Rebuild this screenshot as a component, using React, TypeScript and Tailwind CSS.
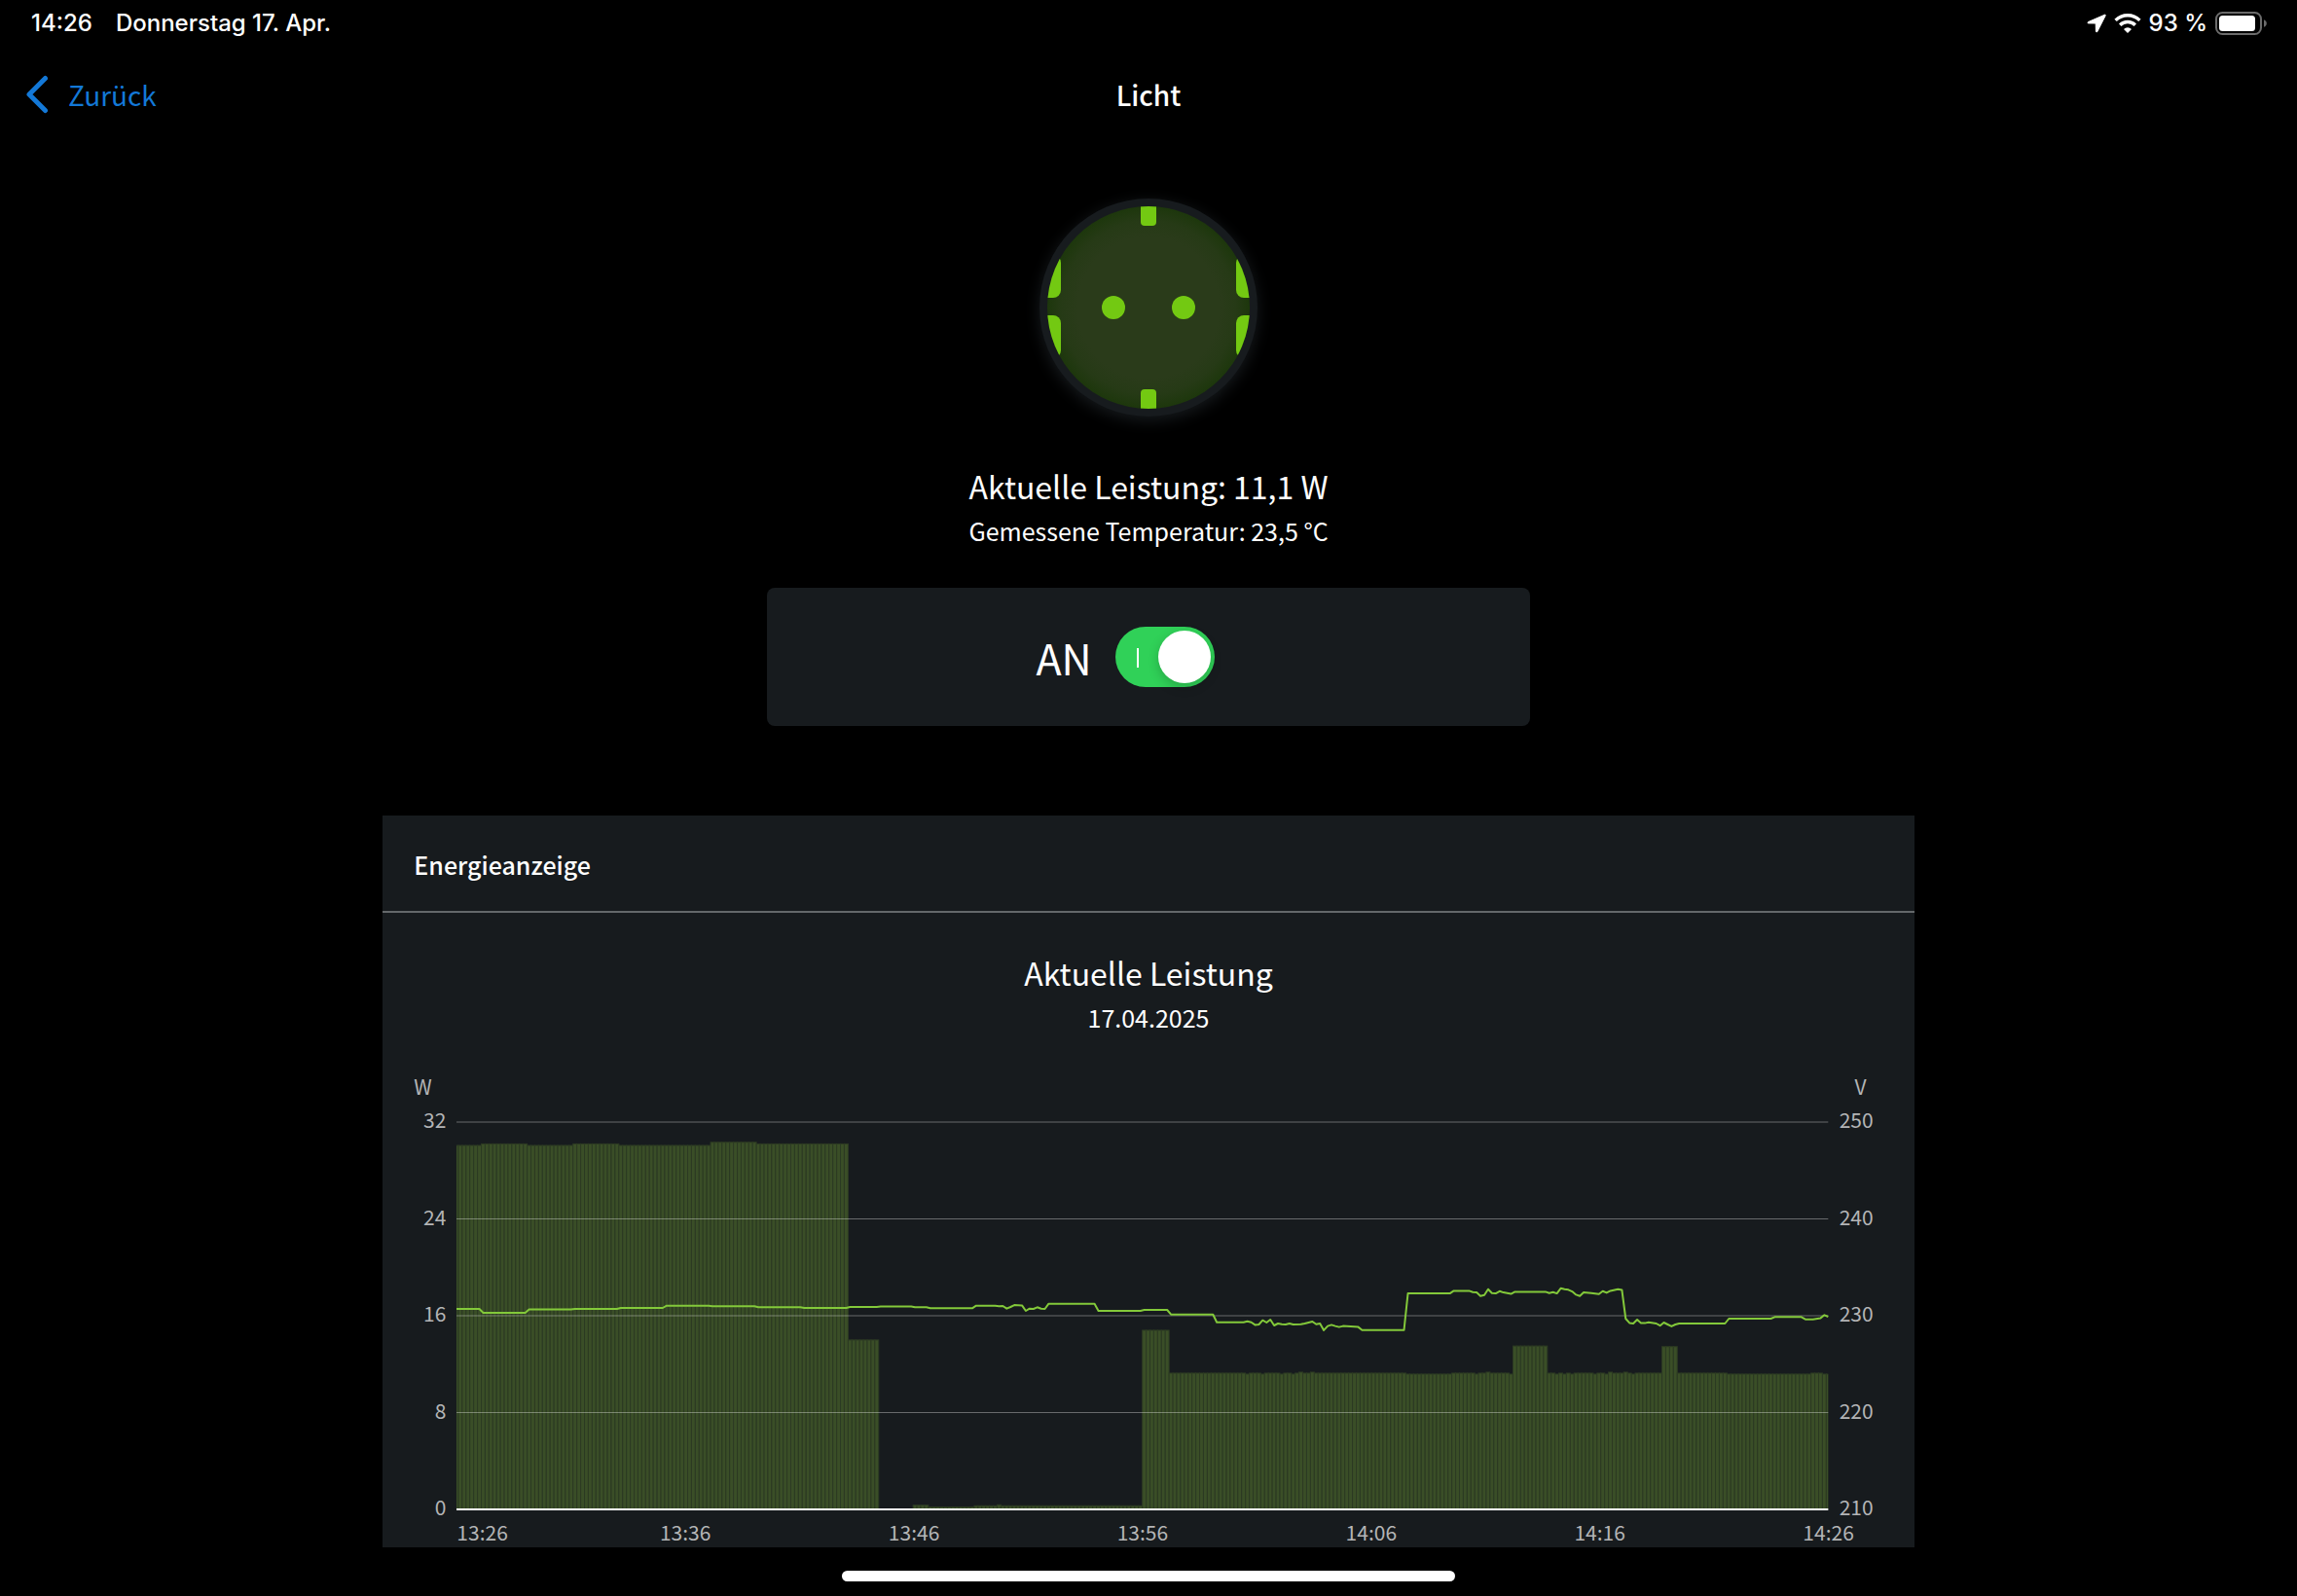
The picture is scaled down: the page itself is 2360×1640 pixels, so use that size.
import { useState } from 'react';

type Run = [from: number, watt: number];
type Point = [sample: number, volt: number];

const SAMPLES = 360;
const PLOT_W = 1409;
const PLOT_H = 398;
const STEP = PLOT_W / (SAMPLES - 1);

const wattTicks = [32, 24, 16, 8, 0];
const voltTicks = [250, 240, 230, 220, 210];
const timeTicks = ['13:26', '13:36', '13:46', '13:56', '14:06', '14:16', '14:26'];

// each entry holds until the next one starts
const powerRuns: Run[] = [
  [0, 30.07], [7, 30.2], [19, 30.07], [31, 30.2], [43, 30.07], [67, 30.33], [79, 30.2],
  [103, 14], [111, 0], [120, 0.35], [124, 0.2], [136, 0.3], [142, 0.38], [143, 0.3],
  [180, 14.8], [187, 11.26], [207, 11.18], [208, 11.26], [211, 11.18], [212, 11.26],
  [216, 11.18], [217, 11.26], [219, 11.18], [220, 11.26], [221, 11.34], [222, 11.26],
  [224, 11.34], [225, 11.26], [249, 11.18], [261, 11.26], [267, 11.18], [268, 11.26],
  [270, 11.34], [271, 11.26], [276, 11.18], [277, 13.5], [286, 11.26], [288, 11.18],
  [289, 11.26], [290, 11.18], [291, 11.26], [292, 11.18], [293, 11.26], [298, 11.18],
  [299, 11.26], [301, 11.18], [302, 11.34], [303, 11.26], [306, 11.34], [307, 11.26],
  [308, 11.18], [309, 11.26], [316, 13.45], [320, 11.26], [333, 11.18], [355, 11.26],
  [358, 11.18],
];

const voltPoints: Point[] = [
  [0, 230.7], [6, 230.7], [7, 230.3], [18, 230.3], [19, 230.65], [30, 230.65], [31, 230.7],
  [42, 230.7], [43, 230.8], [54, 230.8], [55, 231.04], [66, 231.04], [67, 230.97],
  [78, 230.97], [79, 230.87], [90, 230.87], [91, 230.8], [102, 230.8], [103, 230.9],
  [110, 230.9], [111, 230.95], [119, 230.95], [120, 230.87], [123, 230.87], [124, 230.77],
  [135, 230.77], [136, 231.04], [141, 231.04], [142, 230.97], [143, 231], [144, 230.73],
  [145, 230.9], [146, 231.1], [148, 231.07], [149, 230.5], [150, 230.73], [151, 230.7],
  [152, 230.87], [153, 230.72], [154, 230.7], [155, 231.24], [167, 231.24], [168, 230.5],
  [179, 230.5], [180, 230.6], [186, 230.6], [187, 230.13], [198, 230.13], [199, 229.33],
  [206, 229.33], [207, 229.43], [208, 229.33], [209, 229.06], [210, 229.1], [211, 229.53],
  [212, 229.3], [213, 229.6], [214, 229], [215, 229.2], [216, 229.13], [217, 229.1],
  [218, 229.2], [219, 229.1], [221, 229.13], [222, 229.2], [224, 229.4], [225, 229.13],
  [226, 229.2], [227, 228.5], [228, 228.93], [229, 229.06], [230, 228.93], [231, 228.83],
  [232, 228.93], [236, 228.83], [237, 228.52], [248, 228.52], [249, 232.3], [260, 232.3],
  [261, 232.57], [265, 232.57], [266, 232.44], [267, 232.4], [268, 232.03], [269, 232.13],
  [270, 232.74], [271, 232.33], [272, 232.3], [273, 232.53], [274, 232.4], [275, 232.33],
  [276, 232.25], [277, 232.47], [285, 232.47], [286, 232.33], [287, 232.43], [288, 232.3],
  [289, 232.83], [290, 232.74], [291, 232.68], [292, 232.5], [293, 232.17], [294, 232.03],
  [295, 232.4], [297, 232.33], [299, 232.23], [300, 232.53], [301, 232.37], [302, 232.57],
  [304, 232.74], [305, 232.67], [306, 229.7], [307, 229.26], [308, 229.2], [309, 229.6],
  [310, 229.26], [311, 229.24], [312, 229.33], [314, 229.2], [315, 228.97], [316, 229.3],
  [317, 229.1], [318, 228.9], [319, 229.1], [320, 229.2], [332, 229.2], [333, 229.7],
  [344, 229.7], [345, 229.87], [352, 229.87], [353, 229.63], [355, 229.63], [357, 229.76],
  [358, 230.07], [359, 229.9],
];

const wattY = (w: number) => PLOT_H - (w / 32) * PLOT_H;
const voltY = (v: number) => PLOT_H - ((v - 210) / 40) * PLOT_H;

const bars = powerRuns.flatMap(([from, watt], i) => {
  const to = powerRuns[i + 1]?.[0] ?? SAMPLES;
  return Array.from({ length: to - from }, (_, k) => ({ sample: from + k, watt }));
});

const linePoints = voltPoints.map(([s, v]) => `${(s * STEP).toFixed(1)},${voltY(v).toFixed(1)}`).join(' ');

function StatusBar() {
  return (
    <div className="flex h-12 items-center justify-between pl-8 pr-7 font-['Inter',sans-serif] text-2xl font-medium">
      <div className="flex gap-6">
        <span>14:26</span>
        <span>Donnerstag 17. Apr.</span>
      </div>
      <div className="flex items-center gap-2">
        <svg className="h-5 w-5" viewBox="0 0 20 20" fill="currentColor" stroke="currentColor" strokeLinejoin="round">
          <path d="M18.400 1.200 1.400 8.600c-.7.3-.6 1.300.2 1.300l7.600.1.200 8.200c0 .8 1.200 1 1.500.2L19.200 2c.3-.6-.2-1-.8-.8z" />
        </svg>
        <svg className="h-5 w-7" viewBox="0 0 28 20" fill="none" stroke="currentColor" strokeWidth="3.4">
          <path d="M1.600 6.900a17.600 17.600 0 0 1 24.800 0" />
          <path d="M6.200 11.700a11 11 0 0 1 15.600 0" />
          <path d="M14 20l-4-4a5.700 5.700 0 0 1 8 0z" fill="currentColor" stroke="none" />
        </svg>
        <span>93 %</span>
        <svg className="h-6 w-14" viewBox="0 0 56 24">
          <rect x="1" y="1" width="46" height="22" rx="6.500" fill="none" stroke="#6b6b6b" strokeWidth="2" />
          <rect x="4" y="4" width="37" height="16" rx="3.500" fill="#fff" />
          <path d="M50 8.200v7.600c1.800-.7 2.800-2.100 2.800-3.800S51.800 8.900 50 8.200z" fill="#6b6b6b" />
        </svg>
      </div>
    </div>
  );
}

function SocketIcon() {
  return (
    <div className="h-56 w-56 rounded-full bg-[#171b1e] p-2 shadow-[0_4px_16px_#171b1e]">
      <svg className="h-full w-full" viewBox="0 0 208 208">
        <defs>
          <radialGradient id="socket">
            <stop offset="0.7" stopColor="#2a3b1a" />
            <stop offset="0.86" stopColor="#263a16" />
            <stop offset="1" stopColor="#1d370c" />
          </radialGradient>
          <clipPath id="face">
            <circle cx="104" cy="104" r="104" />
          </clipPath>
        </defs>
        <circle cx="104" cy="104" r="104" fill="url(#socket)" />
        <g fill="#73c912" clipPath="url(#face)">
          <rect x="96" y="-10" width="16" height="30" rx="4" />
          <rect x="96" y="188" width="16" height="30" rx="4" />
          <rect x="-20" y="50" width="34" height="44" rx="8" />
          <rect x="-20" y="112" width="34" height="44" rx="8" />
          <rect x="194" y="50" width="34" height="44" rx="8" />
          <rect x="194" y="112" width="34" height="44" rx="8" />
          <circle cx="68" cy="104" r="12" />
          <circle cx="140" cy="104" r="12" />
        </g>
      </svg>
    </div>
  );
}

function PowerSwitch() {
  const [on, setOn] = useState(true);

  return (
    <section className="flex h-[142px] w-1/3 max-w-[784px] items-center justify-center gap-6 rounded-lg bg-[#171b1e] pr-12">
      <label htmlFor="power" className="text-[43px] leading-none">
        {on ? 'AN' : 'AUS'}
      </label>
      <div className="relative h-[62px] w-[102px]">
        <input
          id="power"
          type="checkbox"
          role="switch"
          checked={on}
          onChange={(e) => setOn(e.target.checked)}
          className="peer h-full w-full cursor-pointer appearance-none rounded-full bg-[#39393d] checked:bg-[#30d158]"
        />
        <span className="pointer-events-none absolute left-[22px] top-[22px] h-5 w-[2px] bg-white" />
        <span className="pointer-events-none absolute left-1 top-1 h-[54px] w-[54px] rounded-full bg-white shadow-[0_4px_12px_rgba(0,0,0,0.2)] peer-checked:left-11" />
      </div>
    </section>
  );
}

function PowerChart() {
  return (
    <div className="px-8 text-[21px] leading-6 text-[#b4b5b6]">
      <div className="flex justify-between pr-4">
        <span>W</span>
        <span className="pr-px">V</span>
      </div>
      <div className="mt-[10px] grid grid-cols-[33px_1fr_45px] gap-x-[11px]">
        <div className="flex h-[422px] flex-col justify-between text-right">
          {wattTicks.map((t) => (
            <span key={t}>{t}</span>
          ))}
        </div>
        <svg
          className="mb-[9px] mt-[15px] h-[398px] w-full overflow-visible"
          viewBox="0 0 1409 398"
          preserveAspectRatio="none"
        >
          <defs>
            <clipPath id="plot">
              <rect x="0" y="0" width={PLOT_W} height={PLOT_H} />
            </clipPath>
          </defs>
          <g fill="#3a4e27" stroke="#2c3a23" clipPath="url(#plot)">
            {bars
              .filter((b) => b.watt > 0)
              .map((b) => (
                <rect
                  key={b.sample}
                  x={(b.sample - 0.5) * STEP}
                  y={wattY(b.watt)}
                  width={STEP}
                  height={PLOT_H - wattY(b.watt)}
                />
              ))}
          </g>
          {wattTicks.slice(0, 4).map((t) => (
            <line key={t} x1="0" x2={PLOT_W} y1={wattY(t)} y2={wattY(t)} stroke="#fff" strokeOpacity="0.35" />
          ))}
          <line x1="0" x2={PLOT_W} y1={PLOT_H} y2={PLOT_H} stroke="#fff" strokeWidth="2" />
          <polyline points={linePoints} fill="none" stroke="#83c93a" strokeWidth="2" strokeLinejoin="round" />
        </svg>
        <div className="flex h-[422px] flex-col justify-between">
          {voltTicks.map((t) => (
            <span key={t}>{t}</span>
          ))}
        </div>
        <div className="col-start-2 flex h-[30px] justify-between whitespace-nowrap pt-[2px]">
          {timeTicks.map((t) => (
            <span key={t} className="flex w-0 justify-center first:justify-start">
              {t}
            </span>
          ))}
        </div>
      </div>
    </div>
  );
}

export default function App() {
  return (
    <div className="flex min-h-screen flex-col bg-black font-['Noto_Sans_CJK_SC',sans-serif] text-white">
      <StatusBar />
      <header className="grid h-[102px] grid-cols-3 items-center px-6 pb-1 text-[28px]">
        <button type="button" className="flex items-center gap-5 justify-self-start text-[#1378d7]">
          <svg className="h-10 w-[26px]" viewBox="0 0 26 40" fill="none" stroke="currentColor" strokeWidth="5">
            <path d="M22.500 3.500 6 20l16.500 16.500" strokeLinecap="round" strokeLinejoin="round" />
          </svg>
          Zurück
        </button>
        <h1 className="justify-self-center font-medium">Licht</h1>
      </header>

      <main className="flex flex-1 flex-col items-center pt-[54px]">
        <SocketIcon />
        <p className="mt-12 text-[32px] leading-[46px]">Aktuelle Leistung: 11,1 W</p>
        <p className="mb-9 text-[25px] leading-[46px]">Gemessene Temperatur: 23,5 °C</p>
        <PowerSwitch />

        <section className="mt-[92px] w-2/3 bg-[#171b1e]">
          <h2 className="border-b-2 border-[#64686a] px-8 pb-[30px] pt-8 text-[25px] font-medium leading-9">
            Energieanzeige
          </h2>
          <div className="pb-9 pt-[38px] text-center">
            <h3 className="text-[32px] leading-[46px]">Aktuelle Leistung</h3>
            <p className="text-[25px] leading-[46px]">17.04.2025</p>
          </div>
          <PowerChart />
        </section>
      </main>

      <footer className="flex justify-center pb-[15px] pt-6">
        <div className="h-[11px] w-[630px] rounded-full bg-white" />
      </footer>
    </div>
  );
}
